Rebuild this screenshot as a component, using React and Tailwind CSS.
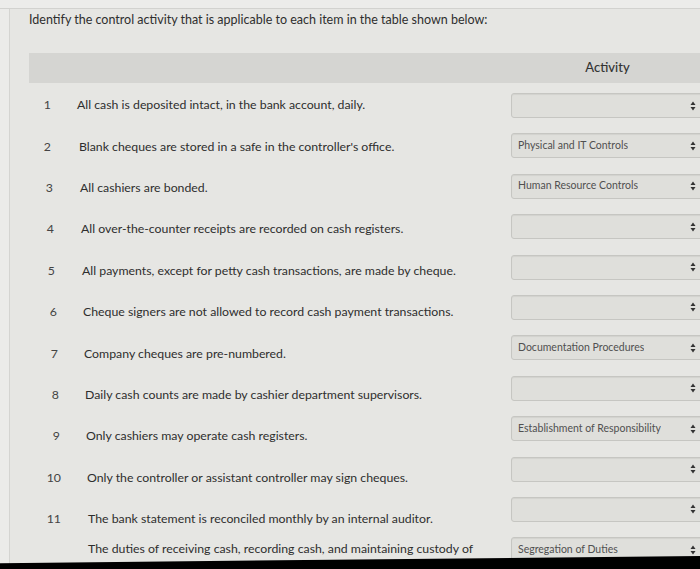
import { Fragment } from 'react';

const rows = [
  { n: 1, text: 'All cash is deposited intact, in the bank account, daily.', value: '', numW: 'w-[22px]', gap: 'ml-[26px]', selMt: 'mt-[9px]' },
  { n: 2, text: "Blank cheques are stored in a safe in the controller's office.", value: 'Physical and IT Controls', numW: 'w-[22px]', gap: 'ml-[28px]', selMt: 'mt-[8px]' },
  { n: 3, text: 'All cashiers are bonded.', value: 'Human Resource Controls', numW: 'w-[24px]', gap: 'ml-[27px]', selMt: 'mt-[7px]' },
  { n: 4, text: 'All over-the-counter receipts are recorded on cash registers.', value: '', numW: 'w-[25px]', gap: 'ml-[27px]', selMt: 'mt-[6px]' },
  { n: 5, text: 'All payments, except for petty cash transactions, are made by cheque.', value: '', numW: 'w-[26px]', gap: 'ml-[27px]', selMt: 'mt-[5px]' },
  { n: 6, text: 'Cheque signers are not allowed to record cash payment transactions.', value: '', numW: 'w-[28px]', gap: 'ml-[26px]', selMt: 'mt-[4px]' },
  { n: 7, text: 'Company cheques are pre-numbered.', value: 'Documentation Procedures', numW: 'w-[29px]', gap: 'ml-[26px]', selMt: 'mt-[3px]' },
  { n: 8, text: 'Daily cash counts are made by cashier department supervisors.', value: '', numW: 'w-[30px]', gap: 'ml-[26px]', selMt: 'mt-[2px]' },
  { n: 9, text: 'Only cashiers may operate cash registers.', value: 'Establishment of Responsibility', numW: 'w-[31px]', gap: 'ml-[26px]', selMt: 'mt-[1px]' },
  { n: 10, text: 'Only the controller or assistant controller may sign cheques.', value: '', numW: 'w-[32px]', gap: 'ml-[26px]', selMt: 'mt-0' },
  { n: 11, text: 'The bank statement is reconciled monthly by an internal auditor.', value: '', numW: 'w-[32px]', gap: 'ml-[27px]', selMt: '-mt-[1px]' },
  { n: 12, text: 'The duties of receiving cash, recording cash, and maintaining custody of cash are assigned to different individuals.', value: 'Segregation of Duties', numW: 'w-[32px]', gap: 'ml-[27px]', selMt: '-mt-[2px]', tall: true },
];

const Arrows = () => (
  <svg width="6" height="10" viewBox="0 0 6 10" className="shrink-0">
    <path d="M3 0.5 L5.5 4 L0.5 4 Z" fill="#333" />
    <path d="M3 9.5 L5.5 6 L0.5 6 Z" fill="#333" />
  </svg>
);

const ActivitySelect = ({ value, className }) => (
  <div
    className={`self-start shrink-0 w-[193px] h-[25px] flex items-center justify-between pl-[6px] pr-[7px] rounded-[3px] border border-[#c6c6c2] bg-[#dfdfdb] shadow-[inset_0_1px_1px_rgba(0,0,0,0.06)] text-[10.5px] text-[#505050] ${className}`}
  >
    <span className="truncate">{value}</span>
    <Arrows />
  </div>
);

const App = () => {
  return (
    <div className="relative w-[700px] h-[569px] overflow-hidden bg-[#e6e6e3] font-['Lato','Liberation_Sans',sans-serif] text-[#2e2e2e]">
      <div className="h-[9px] bg-[#ececea] border-b border-[#d2d2cf]" />
      <div className="flex h-full">
        <div className="w-[10px] shrink-0 bg-[#ebebe9] border-r border-[#d4d4d1]" />
        <div className="pl-[19px] w-[694px] shrink-0">
          <p className="mt-[3px] text-[12.5px] leading-[16px]">
            Identify the control activity that is applicable to each item in the table shown below:
          </p>

          <div className="mt-[25px] h-[30px] bg-[#d5d5d2] flex items-center justify-end">
            <span className="w-[193px] text-center text-[13px] font-medium text-[#333]">Activity</span>
          </div>

          <div className="mt-[1px]">
            {rows.map((row) => (
              <Fragment key={row.n}>
                <div className="flex min-h-[41.4px]">
                  <div className={`flex flex-1 text-[12.3px] ${row.tall ? 'items-start leading-[19px]' : 'items-center leading-[17px]'}`}>
                    <span className={`${row.numW} shrink-0 text-right text-[#444] ${row.tall ? 'mt-[22px]' : ''}`}>{row.n}</span>
                    <span className={`${row.gap} w-[390px]`}>{row.text}</span>
                  </div>
                  <ActivitySelect value={row.value} className={row.selMt} />
                </div>
              </Fragment>
            ))}
          </div>
        </div>
      </div>
      <div className="absolute left-0 right-0 bottom-0 h-[13px] bg-black [clip-path:polygon(0_55%,100%_0,100%_100%,0_100%)]" />
    </div>
  );
};

export default App;
